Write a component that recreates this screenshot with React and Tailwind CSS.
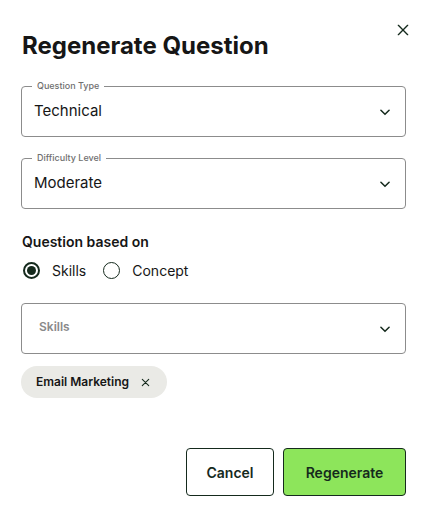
import React, { useState } from "react";

const Chevron = () => (
  <svg width="14" height="14" viewBox="0 0 24 24" fill="none" stroke="#152a1d" strokeWidth="2.6" strokeLinecap="round" strokeLinejoin="round">
    <path d="M5 9l7 7 7-7" />
  </svg>
);

const Cross = ({ size = 14, w = 2 }) => (
  <svg width={size} height={size} viewBox="0 0 24 24" fill="none" stroke="#152a1d" strokeWidth={w} strokeLinecap="round">
    <path d="M5 5l14 14M19 5L5 19" />
  </svg>
);

function OutlinedSelect({ label, value }) {
  return (
    <div className="relative border border-[#8c8c8c] rounded-[4px] h-[51px] pl-[12px] pr-[13px] flex items-center justify-between">
      <span className="absolute left-[10px] -top-[7px] bg-white px-[5px] text-[9px] leading-[12px] text-[#6f6f6f] font-medium">{label}</span>
      <span className="text-[15px] text-[#161616]">{value}</span>
      <Chevron />
    </div>
  );
}

export default function App() {
  const [based, setBased] = useState("skills");
  return (
    <div className="w-[428px] h-[526px] bg-white relative" style={{ fontFamily: "Inter, 'Noto Sans', sans-serif" }}>
      <button className="absolute right-[17px] top-[22px]">
        <Cross size={16} w={2} />
      </button>
      <div className="pl-[21px] pr-[22px] pt-[30px] flex flex-col">
        <h1 className="pl-[1px] text-[24px] leading-[32px] font-bold text-[#161616]">Regenerate Question</h1>
        <div className="mt-[24px]">
          <OutlinedSelect label="Question Type" value="Technical" />
        </div>
        <div className="mt-[21px]">
          <OutlinedSelect label="Difficulty Level" value="Moderate" />
        </div>
        <div className="mt-[24px] pl-[1px] text-[14px] font-semibold text-[#161616] leading-[18px]">Question based on</div>
        <div className="mt-[9px] pl-[2px] flex items-center gap-[17px] text-[14px] text-[#161616]">
          <label className="flex items-center gap-[12px] cursor-pointer" onClick={() => setBased("skills")}>
            <span className="w-[17px] h-[17px] rounded-full border-2 border-[#152a1d] flex items-center justify-center">
              {based === "skills" && <span className="w-[9px] h-[9px] rounded-full bg-[#152a1d]" />}
            </span>
            Skills
          </label>
          <label className="flex items-center gap-[12px] cursor-pointer" onClick={() => setBased("concept")}>
            <span className="w-[17px] h-[17px] rounded-full border-[1.5px] border-[#152a1d] flex items-center justify-center">
              {based === "concept" && <span className="w-[9px] h-[9px] rounded-full bg-[#152a1d]" />}
            </span>
            Concept
          </label>
        </div>
        <div className="mt-[22px] border border-[#8c8c8c] rounded-[4px] h-[51px] pl-[17px] pr-[13px] flex items-start justify-between">
          <span className="mt-[14px] text-[12px] font-semibold text-[#8a8a8a]">Skills</span>
          <span className="mt-[18px]"><Chevron /></span>
        </div>
        <div className="mt-[12px] flex">
          <span className="h-[32px] rounded-full bg-[#eaeae6] pl-[15px] pr-[16px] flex items-center gap-[11px] text-[12px] font-semibold text-[#161616]">
            Email Marketing
            <Cross size={11} w={2.4} />
          </span>
        </div>
        <div className="mt-[50px] flex justify-end gap-[9px]">
          <button className="w-[88px] h-[48px] rounded-[4px] border border-[#152a1d] bg-white text-[14px] font-semibold text-[#152a1d]">Cancel</button>
          <button className="w-[123px] h-[48px] rounded-[4px] border border-[#152a1d] bg-[#8de55b] text-[14px] font-semibold text-[#152a1d]">Regenerate</button>
        </div>
      </div>
    </div>
  );
}
